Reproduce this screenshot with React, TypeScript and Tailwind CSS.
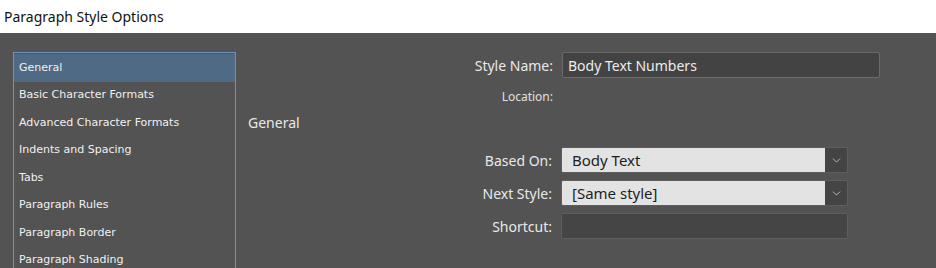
import { ChevronDown } from "lucide-react";

const sections = [
  "General",
  "Basic Character Formats",
  "Advanced Character Formats",
  "Indents and Spacing",
  "Tabs",
  "Paragraph Rules",
  "Paragraph Border",
  "Paragraph Shading",
];

const ui = { fontFamily: '"Noto Sans", "Open Sans", sans-serif' };
const list = { fontFamily: '"DejaVu Sans", Tahoma, sans-serif' };

function Select({ value }: { value: string }) {
  return (
    <div className="flex h-[26px] w-[287px] overflow-hidden rounded-[2px] border border-[#5e5e5e]">
      <div className="flex flex-1 items-center bg-[#e3e3e3] pl-[10px] text-[15px] text-[#1e1e1e]">{value}</div>
      <div className="flex w-[22px] items-center justify-center bg-[#444444] text-[#cfcfcf]">
        <ChevronDown size={13} strokeWidth={1.5} />
      </div>
    </div>
  );
}

export default function App() {
  return (
    <div className="h-[268px] w-[936px] overflow-hidden bg-[#535353]" style={ui}>
      <div className="flex h-[33px] items-center bg-white pl-[4px] text-[14px] text-[#111]">Paragraph Style Options</div>

      <div className="flex pt-[19px]">
        <ul className="ml-[13px] h-[240px] w-[223px] border border-b-0 border-[#6f93bb] pt-[1px]" style={list}>
          {sections.map((s, i) => (
            <li
              key={s}
              className={`flex h-[27.5px] items-center pl-[5px] text-[11px] text-[#f0f0f0] ${
                i === 0 ? "bg-[#4e6a85]" : ""
              }`}
            >
              {s}
            </li>
          ))}
        </ul>

        <div className="relative flex-1">
          <div className="absolute left-[12px] top-[60px] text-[14px] text-[#e8e8e8]">General</div>
          <div className="grid grid-cols-[317px_auto] items-center gap-x-[9px]">
            <span className="text-right text-[14px] text-[#e8e8e8]">Style Name:</span>
            <div className="flex h-[26px] w-[318px] items-center rounded-[2px] border border-[#6a6a6a] bg-[#434343] pl-[5px] text-[14px] text-[#ececec]">
              Body Text Numbers
            </div>
            <span className="mt-[10px] text-right text-[12px] text-[#e0e0e0]">Location:</span>
            <span />
          </div>
          <div className="mt-[41px] grid grid-cols-[316px_auto] items-center gap-x-[9px] gap-y-[7px]">
            <span className="text-right text-[14px] text-[#e8e8e8]">Based On:</span>
            <Select value="Body Text" />
            <span className="text-right text-[14px] text-[#e8e8e8]">Next Style:</span>
            <Select value="[Same style]" />
            <span className="text-right text-[14px] text-[#e8e8e8]">Shortcut:</span>
            <div className="h-[26px] w-[287px] rounded-[2px] border border-[#5e5e5e] bg-[#454545]" />
          </div>
        </div>
      </div>
    </div>
  );
}
